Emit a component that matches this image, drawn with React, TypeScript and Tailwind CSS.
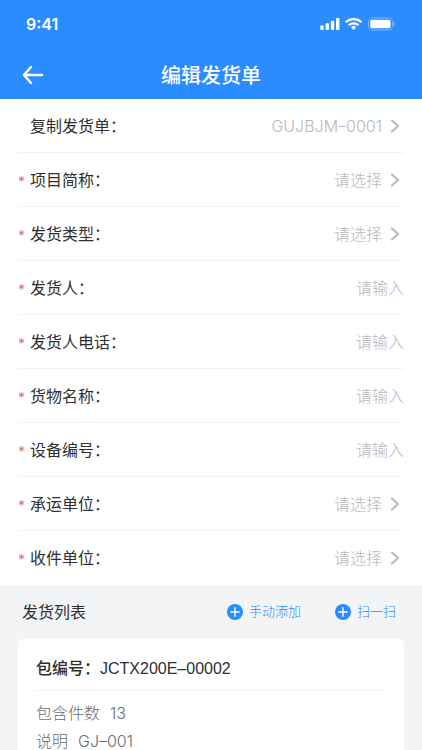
import { useState } from 'react'

type Field = {
  id: string
  label: string
  kind: 'select' | 'input'
  required?: boolean
  value?: string
}

const FIELDS: Field[] = [
  { id: 'copyFrom', label: '复制发货单：', kind: 'select', value: 'GUJBJM–0001' },
  { id: 'project', label: '项目简称：', kind: 'select', required: true },
  { id: 'shipType', label: '发货类型：', kind: 'select', required: true },
  { id: 'sender', label: '发货人：', kind: 'input', required: true },
  { id: 'senderPhone', label: '发货人电话：', kind: 'input', required: true },
  { id: 'goodsName', label: '货物名称：', kind: 'input', required: true },
  { id: 'deviceNo', label: '设备编号：', kind: 'input', required: true },
  { id: 'carrier', label: '承运单位：', kind: 'select', required: true },
  { id: 'receiver', label: '收件单位：', kind: 'select', required: true },
]

function StatusIcons() {
  return (
    <svg width="76" height="14" viewBox="0 0 76 14" fill="#fff" aria-hidden="true">
      <rect x="0.3" y="8.4" width="3.4" height="4.6" rx="1" />
      <rect x="5.6" y="6.2" width="3.4" height="6.8" rx="1" />
      <rect x="10.8" y="3.8" width="3.4" height="9.2" rx="1" />
      <rect x="16" y="1" width="3.4" height="12" rx="1" />
      <g fill="none" stroke="#fff" strokeWidth="2.2">
        <path d="M25.7 5.3a11.4 11.4 0 0 1 15.8 0" />
        <path d="M28.7 8.3a7 7 0 0 1 9.8 0" />
      </g>
      <path d="M33.6 12.9l2.5-2.6a3.6 3.6 0 0 0-5 0z" />
      <rect x="48.5" y="0.9" width="24" height="12.2" rx="3.4" fill="none" stroke="#fff" strokeOpacity="0.35" />
      <rect x="50.2" y="2.8" width="20.4" height="8.4" rx="1.8" />
      <path d="M73.8 5v4c1.7-.7 1.7-3.3 0-4z" opacity="0.4" />
    </svg>
  )
}

function PlusCircle() {
  return (
    <svg width="16" height="16" viewBox="0 0 16 16" aria-hidden="true">
      <circle cx="8" cy="8" r="8" fill="#2b8cff" />
      <path d="M8 3.8v8.4M3.8 8h8.4" stroke="#fff" strokeWidth="1.4" strokeLinecap="round" />
    </svg>
  )
}

function FieldRow({ field }: { field: Field }) {
  const [text, setText] = useState('')

  return (
    <div className="flex h-[54px] items-center border-b border-[#f3f3f5] last:border-b-0">
      <span className="w-3 shrink-0 pt-1 text-sm text-[#f4607c]">{field.required ? '*' : ''}</span>
      <label htmlFor={field.id} className="shrink-0 text-[#2f2f31]">
        {field.label}
      </label>
      {field.kind === 'select' ? (
        <button
          id={field.id}
          type="button"
          className="flex flex-1 items-center justify-end gap-2 pr-1 font-light text-[#b8b8be]"
        >
          {field.value ?? '请选择'}
          <svg width="10" height="14" viewBox="0 0 10 14" fill="none" aria-hidden="true">
            <path d="M2 1.5L8 7l-6 5.5" stroke="#bcbcc2" strokeWidth="2.2" strokeLinecap="round" />
          </svg>
        </button>
      ) : (
        <input
          id={field.id}
          value={text}
          onChange={(e) => setText(e.target.value)}
          placeholder="请输入"
          className="min-w-0 flex-1 bg-transparent text-right font-light outline-none placeholder:text-[#b8b8be]"
        />
      )}
    </div>
  )
}

export default function App() {
  return (
    <div className="flex h-screen flex-col bg-[#f2f4f6] font-['Inter','Noto_Sans_CJK_SC',sans-serif] text-base">
      <header className="shrink-0 bg-[#2b8cff] text-white">
        <div className="flex h-[51px] items-center justify-between px-[26px] pb-1">
          <span className="font-semibold">9:41</span>
          <StatusIcons />
        </div>
        <div className="grid h-12 grid-cols-[1fr_auto_1fr] items-center px-[22px]">
          <button type="button" aria-label="返回" className="justify-self-start">
            <svg width="22" height="20" viewBox="0 0 22 20" fill="none" aria-hidden="true">
              <path d="M9 2L2 10l7 8M2 10h18" stroke="#fff" strokeWidth="2.4" strokeLinecap="round" strokeLinejoin="round" />
            </svg>
          </button>
          <h1 className="pt-0.5 text-xl font-medium">编辑发货单</h1>
        </div>
      </header>

      <main className="min-h-0 flex-1 overflow-y-auto [scrollbar-width:none]">
        <form className="bg-white px-[18px]">
          {FIELDS.map((f) => (
            <FieldRow key={f.id} field={f} />
          ))}
        </form>

        <section className="px-[18px]">
          <div className="flex h-[54px] items-center pr-2 pl-1">
            <h2 className="flex-1 text-[#2f2f31]">发货列表</h2>
            <div className="flex gap-[34px] text-[13px] font-light text-[#2b8cff]">
              <button type="button" className="flex items-center gap-1.5">
                <PlusCircle />
                手动添加
              </button>
              <button type="button" className="flex items-center gap-1.5">
                <PlusCircle />
                扫一扫
              </button>
            </div>
          </div>

          <article className="rounded-md bg-white px-[18px] pb-4">
            <h3 className="flex h-[52px] items-center border-b border-[#f0f0f2] pt-2 font-['Liberation_Sans','Noto_Sans_CJK_SC',sans-serif] font-medium text-[#2f2f31]">
              包编号：JCTX200E–00002
            </h3>
            <div className="flex flex-col gap-3 pt-3.5 leading-4 font-light text-[#6c6c70]">
              <p className="flex gap-2.5">
                <span>包含件数</span>
                <span>13</span>
              </p>
              <p className="flex gap-2.5">
                <span>说明</span>
                <span>GJ–001</span>
              </p>
            </div>
          </article>
        </section>
      </main>
    </div>
  )
}
